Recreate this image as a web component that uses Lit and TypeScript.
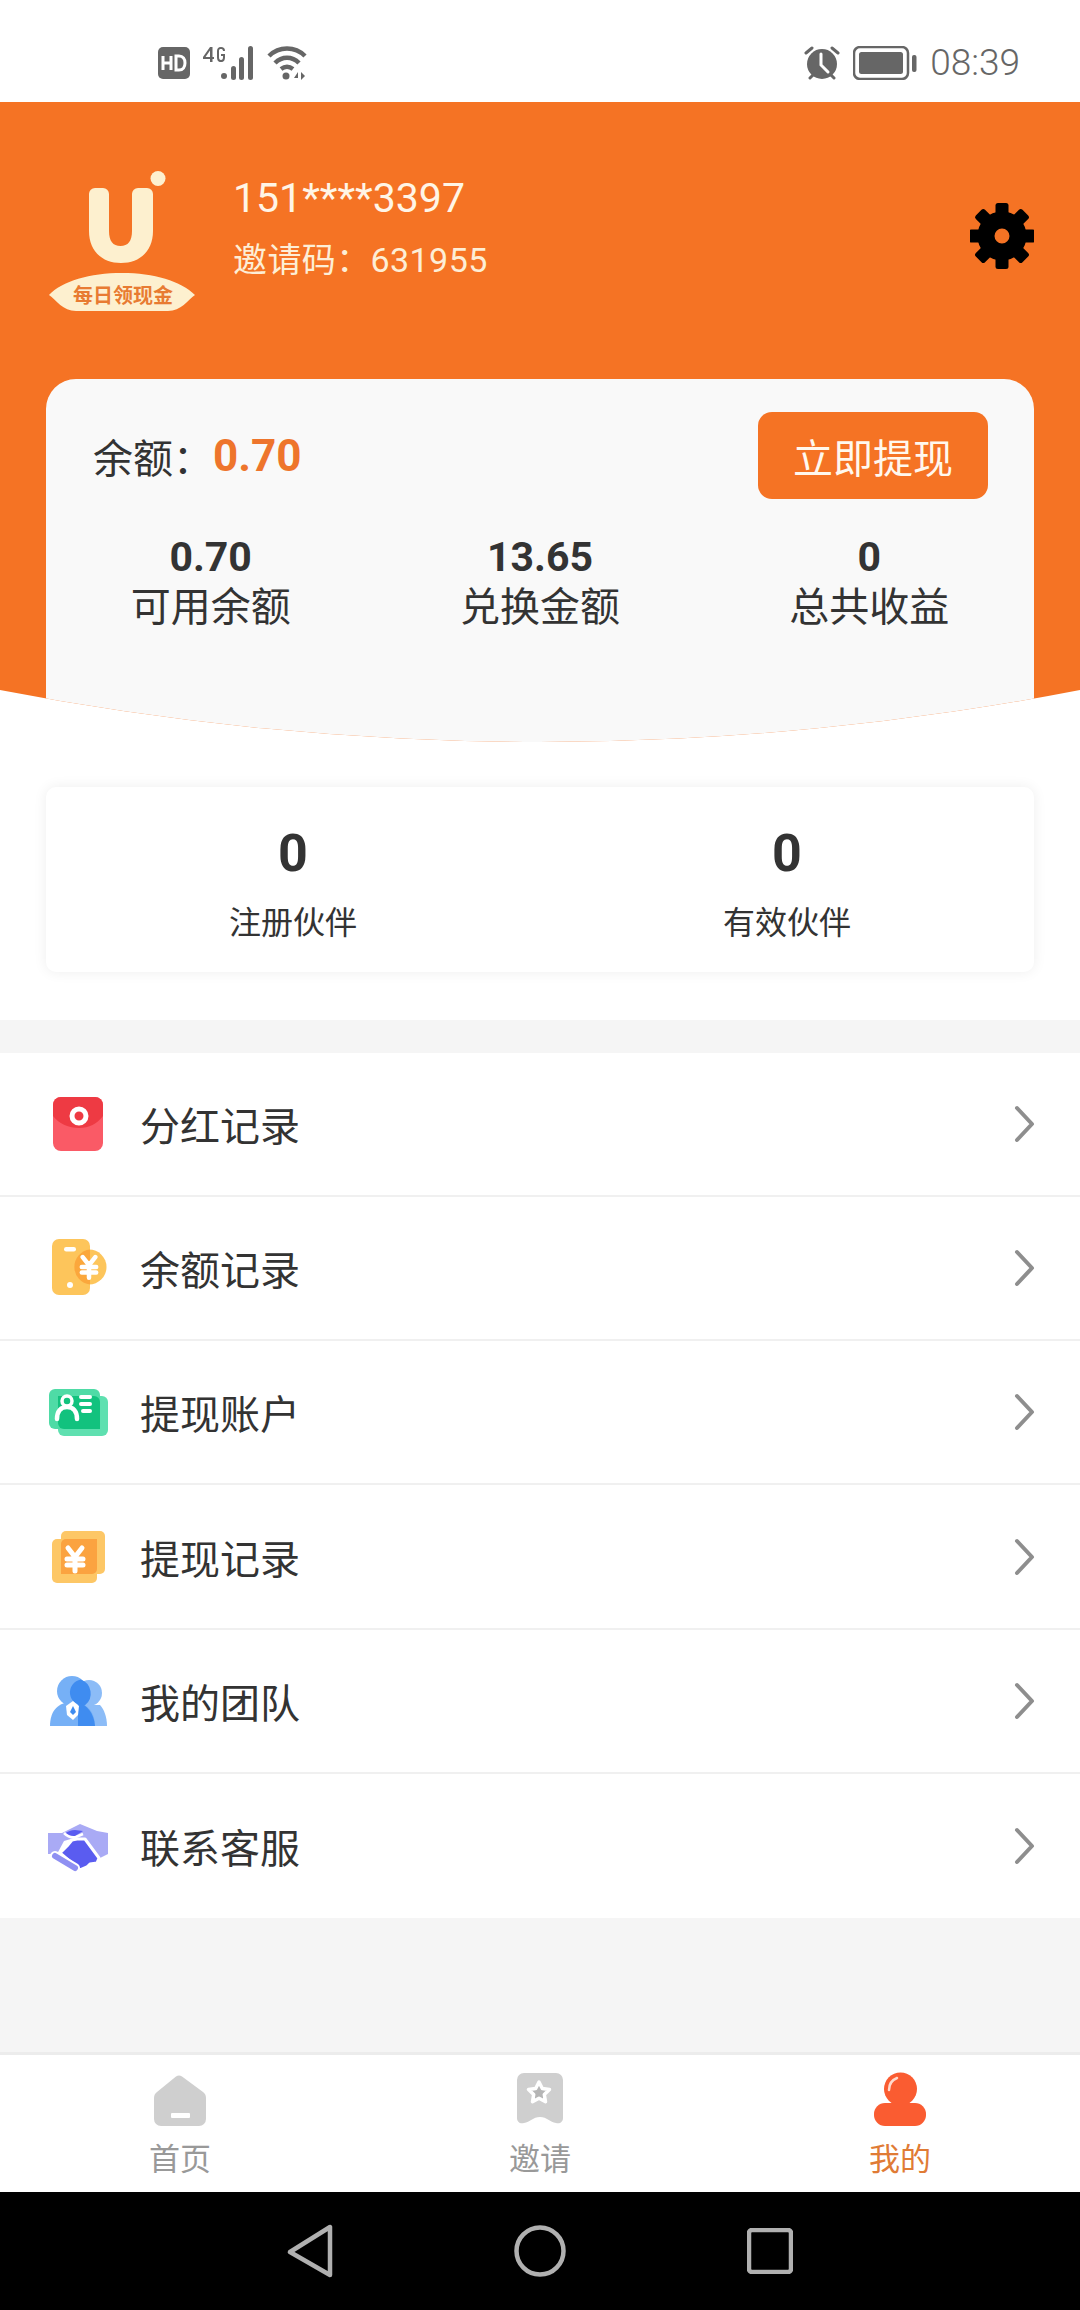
import { LitElement, html, css, svg } from 'lit';
import { customElement } from 'lit/decorators.js';

const yen = (x: number, y: number, s = 1) => svg`
  <path transform="translate(${x} ${y}) scale(${s})" d="M-7 -11 L0 -2 L7 -11 M-8 0 H8 M-8 6 H8 M0 -2 V12"
    fill="none" stroke="#fff" stroke-width="5" stroke-linecap="round" stroke-linejoin="round"/>`;

const rowIcons = {
  bonus: svg`
    <rect x="5" y="3" width="50" height="54" rx="8" fill="#fa5a66"/>
    <path d="M5 22V11a8 8 0 0 1 8-8h34a8 8 0 0 1 8 8v11c-6 8-14 12-24 12S11 30 5 22z" fill="#ee3a43"/>
    <circle cx="31" cy="22" r="7" fill="#ee3a43" stroke="#fff" stroke-width="5"/>`,
  balance: svg`
    <rect x="4" y="1" width="38" height="56" rx="7" fill="#fdc55b"/>
    <circle cx="41" cy="29" r="17.500" fill="#fdc55b"/>
    <path d="M42 11.600a17.500 17.500 0 0 0 0 34.800z" fill="#fba73c"/>
    <rect x="16" y="9" width="12" height="4.500" rx="2.200" fill="#fff"/>
    <circle cx="22" cy="47" r="3" fill="#fff"/>
    ${yen(41, 29, 0.9)}`,
  account: svg`
    <rect x="10" y="14" width="50" height="40" rx="6" fill="#5fe0b0"/>
    <rect x="1" y="7" width="51" height="40" rx="6" fill="#4fdba6"/>
    <path d="M10 14h36a6 6 0 0 1 6 6v27H16a6 6 0 0 1-6-6z" fill="#12c27e"/>
    <circle cx="19" cy="19" r="5" fill="none" stroke="#fff" stroke-width="3.500"/>
    <path d="M9 37c0-8 4-12 10-12s10 4 10 12" fill="none" stroke="#fff" stroke-width="4.500" stroke-linecap="round"/>
    <path d="M33 15h9M33 22h9M35 29h7" stroke="#fff" stroke-width="4" stroke-linecap="round"/>`,
  withdraw: svg`
    <rect x="13" y="4" width="44" height="43" rx="5" fill="#fdc766"/>
    <rect x="4" y="12" width="45" height="44" rx="5" fill="#fdc766"/>
    <path d="M18 12h31v30a5 5 0 0 1-5 5H13V17a5 5 0 0 1 5-5z" fill="#fba340"/>
    ${yen(27, 32, 1)}`,
  team: svg`
    <circle cx="41" cy="22" r="13" fill="#8cbcf7"/>
    <path d="M30 55V34h22c4 4 7 12 7 21z" fill="#8cbcf7"/>
    <circle cx="24" cy="20" r="15" fill="#76b0f6"/>
    <path d="M2 55c0-15 8-24 22-24s23 9 23 24z" fill="#76b0f6"/>
    <path d="M33 8.500a13 13 0 0 0 4 25.800 15 15 0 0 0-4-25.800z" fill="#3f8cf0"/>
    <path d="M30 31c9 3 16 11 17 24H30z" fill="#3f8cf0"/>
    <path d="M25 30l6 5-1 9-5 5-6-5-1-9z" fill="#fff"/>
    <path d="M25 35l3 6-3 3-3-3z" fill="#3f8cf0"/>`,
  service: svg`
    <path d="M0 17h14L32 8l17 7 11 2v21l-8 4-17-20H26l-10 3-7 13H0z" fill="#a9aaf5"/>
    <path d="M17 17.500c3-2 6-3.500 10-3.500l8 1-8 5c-3 1-7 0-10-2.500z" fill="#5a5cf0"/>
    <path d="M16 17c3 3 8 5 12 4l7-3" fill="none" stroke="#fff" stroke-width="2.500"/>
    <path d="M29 23h8l14 19-2 5-7 1-3 3-7 3-7-6-13-11 7-7 5-6z" fill="#5a5cf0" stroke="#fff" stroke-width="3" stroke-linejoin="round"/>
    <path d="M7 40l20 12" stroke="#fff" stroke-width="10" stroke-linecap="round"/>
    <path d="M7 40l20 12" stroke="#8f90f2" stroke-width="6" stroke-linecap="round"/>`,
};

const ROWS = [
  { label: '分红记录', icon: rowIcons.bonus },
  { label: '余额记录', icon: rowIcons.balance },
  { label: '提现账户', icon: rowIcons.account },
  { label: '提现记录', icon: rowIcons.withdraw },
  { label: '我的团队', icon: rowIcons.team },
  { label: '联系客服', icon: rowIcons.service },
];

const STATS = [
  { value: '0.70', label: '可用余额' },
  { value: '13.65', label: '兑换金额' },
  { value: '0', label: '总共收益' },
];

const TEAM = [
  { value: '0', label: '注册伙伴' },
  { value: '0', label: '有效伙伴' },
];

@customElement('app-root')
export class AppRoot extends LitElement {

  static styles = css`
    :host {
      display: flex;
      flex-direction: column;
      height: 2310px;
      background: #f5f5f5;
      color: #333;
      font-family: Roboto, "Noto Sans CJK SC", sans-serif;
    }

    svg { display: block; flex: none; }

    .status {
      height: 102px;
      box-sizing: border-box;
      padding: 46px 60px 0 158px;
      background: #fff;
      display: flex;
      justify-content: space-between;
      align-items: flex-start;
      color: #666;
    }
    .status-left, .status-right { display: flex; align-items: center; }
    .status-left { gap: 12px; }
    .status-right { gap: 13px; }
    .time { font-size: 37px; font-weight: 300; line-height: 34px; }

    .hero-wrap { background: #fff; }
    .hero {
      height: 640px;
      box-sizing: border-box;
      padding: 68px 46px 0;
      background: #f57324;
      clip-path: circle(2830px at 50% calc(100% - 2830px));
    }
    .profile { display: flex; align-items: flex-start; height: 209px; }
    .who { margin: 1px 0 0 35px; flex: 1; color: #fff5e6; }
    .phone { font-size: 41px; line-height: 54px; }
    .invite { font-size: 34px; line-height: 46px; margin-top: 12px; color: #fdeed6; letter-spacing: 0.4px; }
    .gear { margin-top: 33px; }

    .card {
      height: 400px;
      background: #f9f9f9;
      border-radius: 30px 30px 0 0;
    }
    .balance {
      display: flex;
      align-items: center;
      justify-content: space-between;
      padding: 33px 46px 0 47px;
    }
    .balance-text { font-size: 40px; display: flex; align-items: center; }
    .balance-text b { font-size: 44px; font-weight: 700; color: #ee752c; }
    .btn {
      width: 230px;
      height: 87px;
      border-radius: 14px;
      background: #f57324;
      color: #fff8ee;
      font-size: 40px;
      display: flex;
      align-items: center;
      justify-content: center;
    }
    .stats { display: grid; grid-template-columns: repeat(3, 1fr); margin-top: 36px; text-align: center; }
    .stat-value { font-size: 41px; font-weight: 700; line-height: 44px; }
    .stat-label { font-size: 40px; line-height: 56px; margin-top: 1px; }

    .team-wrap { background: #fff; padding: 45px 46px 48px; }
    .team {
      height: 185px;
      box-sizing: border-box;
      padding-top: 37px;
      border-radius: 10px;
      background: #fff;
      box-shadow: 0 0 14px rgba(0, 0, 0, 0.07);
      display: grid;
      grid-template-columns: 1fr 1fr;
      text-align: center;
    }
    .team-value { font-size: 52px; font-weight: 700; line-height: 60px; }
    .team-label { font-size: 32px; line-height: 44px; margin-top: 17px; }

    .list { margin-top: 33px; background: #fff; }
    .row {
      height: 144.17px;
      box-sizing: border-box;
      padding: 0 45px 0 48px;
      display: flex;
      align-items: center;
      border-bottom: 2px solid #f0f0f0;
      font-size: 40px;
    }
    .row:last-child { border-bottom: none; }
    .row span { margin-left: 32px; flex: 1; }

    .spacer { flex: 1; }

    .tabs {
      height: 140px;
      box-sizing: border-box;
      padding-top: 17px;
      border-top: 3px solid #ececec;
      background: #fff;
      display: grid;
      grid-template-columns: repeat(3, 1fr);
    }
    .tab { display: flex; flex-direction: column; align-items: center; color: #999; font-size: 31px; line-height: 40px; }
    .tab svg { margin-bottom: 14px; }
    .tab.active { color: #e07b35; }

    .nav {
      height: 118px;
      background: #000;
      display: grid;
      grid-template-columns: repeat(3, 230px);
      justify-content: center;
      justify-items: center;
      align-items: center;
    }
  `;

  renderStatus() {
    return html`
      <div class="status">
        <div class="status-left">
          <svg width="32" height="32" viewBox="0 0 32 32">
            <rect width="32" height="32" rx="5" fill="#666"/>
            <path d="M5 9v14M5 16h8M13 9v14M18 9v14h3c4 0 6-3 6-7s-2-7-6-7z" fill="none" stroke="#fff" stroke-width="3"/>
          </svg>
          <svg width="53" height="34" viewBox="0 0 53 34" fill="#666">
            <path d="M8 1L1 11v2h7v3h2.500v-3H12v-2h-1.500V1zM8 11H3.500L8 4.500z"/>
            <path d="M19 1c-3 0-4 2-4 4v6c0 3 1 5 4 5s4-2 4-5V8h-4v2h2v1c0 2-.5 3-2 3s-2-1-2-3V5c0-1.500.5-2 2-2 1 0 2 .5 2 2h2c0-3-1.500-4-4-4z"/>
            <circle cx="22" cy="30" r="3"/>
            <rect x="29" y="20" width="5" height="14" rx="2.500"/>
            <rect x="37" y="11" width="5" height="23" rx="2.500"/>
            <rect x="46" y="0" width="5" height="34" rx="2.500"/>
          </svg>
          <svg width="42" height="34" viewBox="0 0 42 34">
            <path d="M2 10C12 0 28 0 38 10M8 17c7-7 17-7 24 0M14 23c4-3 8-3 12 0" fill="none" stroke="#666" stroke-width="4.500"/>
            <circle cx="19" cy="30" r="3.500" fill="#666"/>
            <path d="M31 26l-4 6h4zM34 26v8l4-4z" fill="#666"/>
          </svg>
        </div>
        <div class="status-right">
          <svg width="36" height="34" viewBox="0 0 36 34">
            <circle cx="18" cy="18" r="15" fill="#666"/>
            <path d="M17 8v11l7 7" fill="none" stroke="#fff" stroke-width="3" stroke-linecap="round"/>
            <path d="M2 7l6-5M34 7l-6-5M6 32l3-3M30 32l-3-3" stroke="#666" stroke-width="3" stroke-linecap="round"/>
          </svg>
          <svg width="64" height="34" viewBox="0 0 64 34">
            <rect x="1" y="1" width="54" height="32" rx="6" fill="none" stroke="#666" stroke-width="2.500"/>
            <rect x="6" y="6" width="44" height="22" rx="2.500" fill="#666"/>
            <rect x="59" y="9" width="4.500" height="17" rx="2" fill="#666"/>
          </svg>
          <span class="time">08:39</span>
        </div>
      </div>
    `;
  }

  renderLogo() {
    return html`
      <svg width="152" height="145" viewBox="0 0 152 145">
        <path d="M43 24a6 6 0 0 1 6-6h8a6 6 0 0 1 6 6v37c0 10 4 15 11.500 15S86 71 86 61V24a6 6 0 0 1 6-6h9a6 6 0 0 1 6 6v37c0 20-13 32-32 32S43 81 43 61z" fill="#fdf0cf"/>
        <circle cx="112" cy="8.500" r="7.500" fill="#fdf0cf"/>
        <path d="M3 125C16 111 44 103 76 103s59 8 73 22c-7 5-14 16-27 16H30C17 141 10 130 3 125z" fill="#fdf0cf"/>
        <text x="77" y="133" text-anchor="middle" font-size="20" font-weight="700" fill="#e87b32" font-family="'Noto Sans CJK SC', sans-serif">每日领现金</text>
      </svg>
    `;
  }

  renderGear() {
    const teeth = [0, 45, 90, 135, 180, 225, 270, 315];
    return html`
      <svg class="gear" width="64" height="66" viewBox="0 0 64 66">
        <g transform="translate(32 33)">
          ${teeth.map(a => svg`<rect x="-6.500" y="-33" width="13" height="16" rx="2.500" transform="rotate(${a})"/>`)}
          <circle r="16" fill="none" stroke="#000" stroke-width="17"/>
        </g>
      </svg>
    `;
  }

  renderTabs() {
    return html`
      <div class="tabs">
        <div class="tab">
          <svg width="52" height="54" viewBox="0 -3 52 54">
            <path d="M22 1.500q3-2 6 0L49 17q3 2 3 6v21a7 7 0 0 1-7 7H7a7 7 0 0 1-7-7V23q0-4 3-6z" fill="#cfcfcf"/>
            <rect x="17" y="38" width="19" height="5" rx="1" fill="#fff"/>
          </svg>
          首页
        </div>
        <div class="tab">
          <svg width="56" height="54" viewBox="-5 -1 56 54">
            <path d="M7 0h32a7 7 0 0 1 7 7v38c0 4-3 6-7 5-6-1-9-6-16-6S13 49 7 50c-4 1-7-1-7-5V7a7 7 0 0 1 7-7z" fill="#cfcfcf"/>
            <path d="M22 9l3.300 6.500 7.200 1-5.200 5 1.200 7.200-6.500-3.400-6.500 3.400 1.200-7.200-5.200-5 7.200-1z" fill="#b5b5b5" stroke="#fff" stroke-width="3.500" stroke-linejoin="round"/>
          </svg>
          邀请
        </div>
        <div class="tab active">
          <svg width="52" height="54" viewBox="0 0 52 54">
            <circle cx="26.500" cy="17" r="16.500" fill="#fa5c31"/>
            <rect x="0" y="31" width="52" height="23" rx="11" fill="#fa5c31"/>
            <path d="M15 18c0-6 3-10 8-12" fill="none" stroke="#ffd9cc" stroke-width="2.500" stroke-linecap="round"/>
          </svg>
          我的
        </div>
      </div>
    `;
  }

  render() {
    return html`
      ${this.renderStatus()}
      <div class="hero-wrap">
        <div class="hero">
          <div class="profile">
            ${this.renderLogo()}
            <div class="who">
              <div class="phone">151****3397</div>
              <div class="invite">邀请码：631955</div>
            </div>
            ${this.renderGear()}
          </div>
          <div class="card">
            <div class="balance">
              <div class="balance-text">余额：<b>0.70</b></div>
              <div class="btn">立即提现</div>
            </div>
            <div class="stats">
              ${STATS.map(s => html`
                <div>
                  <div class="stat-value">${s.value}</div>
                  <div class="stat-label">${s.label}</div>
                </div>
              `)}
            </div>
          </div>
        </div>
      </div>
      <div class="team-wrap">
        <div class="team">
          ${TEAM.map(t => html`
            <div>
              <div class="team-value">${t.value}</div>
              <div class="team-label">${t.label}</div>
            </div>
          `)}
        </div>
      </div>
      <div class="list">
        ${ROWS.map(r => html`
          <div class="row">
            <svg width="60" height="60" viewBox="0 0 60 60">${r.icon}</svg>
            <span>${r.label}</span>
            <svg width="22" height="38" viewBox="0 0 22 38">
              <path d="M4 3l15 16L4 35" fill="none" stroke="#8e8e8e" stroke-width="4" stroke-linecap="round" stroke-linejoin="round"/>
            </svg>
          </div>
        `)}
      </div>
      <div class="spacer"></div>
      ${this.renderTabs()}
      <div class="nav">
        <svg width="46" height="54" viewBox="0 0 46 54">
          <path d="M43 3v48L3 28z" fill="none" stroke="#b0b0b0" stroke-width="4.500" stroke-linejoin="round"/>
        </svg>
        <svg width="52" height="52" viewBox="0 0 52 52">
          <circle cx="26" cy="26" r="23.500" fill="none" stroke="#b0b0b0" stroke-width="4.500"/>
        </svg>
        <svg width="46" height="46" viewBox="0 0 46 46">
          <rect x="2" y="2" width="42" height="42" rx="3" fill="none" stroke="#b0b0b0" stroke-width="4.500"/>
        </svg>
      </div>
    `;
  }

}
